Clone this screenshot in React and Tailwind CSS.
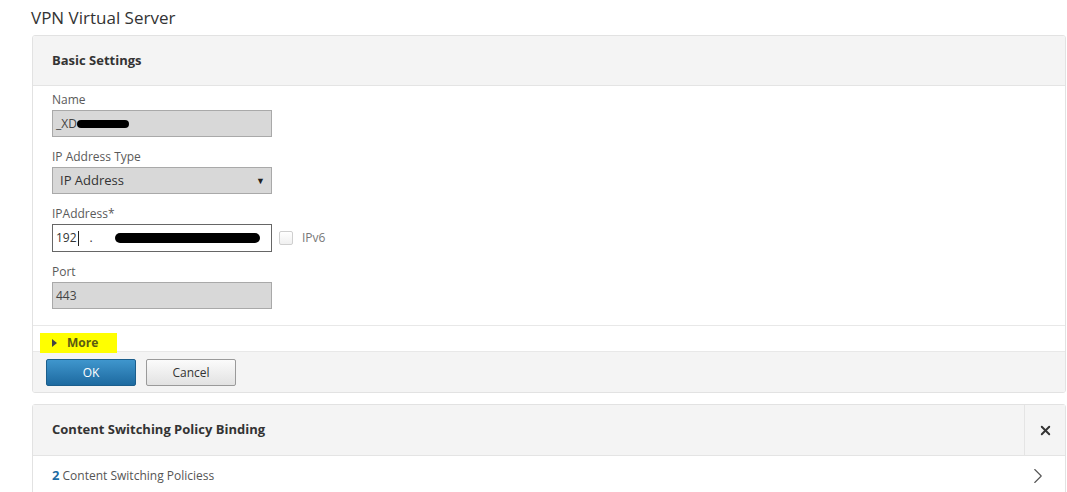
import { X, ChevronRight } from 'lucide-react';

const font = { fontFamily: '"Open Sans", "Liberation Sans", sans-serif' };

const Field = ({ label, children }) => (
  <div className="mb-[11px]">
    <div className="text-[12px] leading-[18px] text-[#5a5a5a]">{label}</div>
    <div className="mt-[1px] flex items-center">{children}</div>
  </div>
);

const Blob = ({ className }) => (
  <span className={`absolute bg-black rounded-full ${className}`} />
);

const App = () => {
  return (
    <div className="min-h-screen bg-white pl-[31px] pr-[1px] pt-[6px] text-[#333]" style={font}>
      {/* Page title */}
      <h1 className="text-[17px] leading-[24px] font-normal text-[#333]">VPN Virtual Server</h1>

      {/* Basic Settings panel */}
      <div className="ml-[1px] mt-[5px] border border-[#e2e2e2] rounded-[3px] overflow-hidden">
        <div className="h-[50px] bg-[#f4f4f4] border-b border-[#e4e4e4] flex items-center pl-[19px]">
          <span className="text-[13px] font-bold text-[#333]">Basic Settings</span>
        </div>

        <div className="pl-[19px] pt-[5px] pb-[5px] border-b border-[#e8e8e8]">
          <Field label="Name">
            <div className="relative w-[220px] h-[27px] bg-[#d8d8d8] border border-[#a9a9a9] pl-[3px] text-[12px] leading-[25px] text-[#444]">
              _XD
              <Blob className="left-[24px] top-[9px] w-[52px] h-[8px]" />
            </div>
          </Field>

          <Field label="IP Address Type">
            <div className="w-[220px] h-[27px] bg-[#d8d8d8] border border-[#a9a9a9] pl-[7px] pr-[6px] flex items-center justify-between text-[13px] text-[#333]">
              <span>IP Address</span>
              <span className="text-[9px] text-[#222]">▼</span>
            </div>
          </Field>

          <Field label="IPAddress*">
            <div className="relative w-[220px] h-[28px] bg-white border border-[#666] pl-[3px] flex items-center text-[12px] text-[#333]">
              <span>192</span>
              <span className="w-px h-[15px] bg-[#222] ml-[1px]" />
              <span className="ml-[11px]">.</span>
              <Blob className="left-[62px] top-[8px] w-[145px] h-[10px]" />
            </div>
            <span className="ml-[7px] w-[14px] h-[14px] border border-[#cfcfcf] rounded-[2px] bg-gradient-to-b from-white to-[#f0f0f0]" />
            <span className="ml-[9px] text-[12px] text-[#777]">IPv6</span>
          </Field>

          <Field label="Port">
            <div className="w-[220px] h-[27px] bg-[#d8d8d8] border border-[#a9a9a9] pl-[3px] text-[12px] leading-[25px] text-[#444]">
              443
            </div>
          </Field>
        </div>

        {/* More toggle */}
        <div className="h-[26px] pl-[7px] pt-[3px] border-b border-[#e8e8e8]">
          <div className="inline-flex items-center h-[20px] w-[77px] bg-[#ffff00] pl-[12px]">
            <span className="w-0 h-0 border-y-[4px] border-y-transparent border-l-[5px] border-l-[#444]" />
            <span className="ml-[10px] text-[12px] font-bold text-[#5b5b12]">More</span>
          </div>
        </div>

        {/* Actions */}
        <div className="bg-[#f4f4f4] pl-[13px] pt-[7px] pb-[6px] flex gap-[10px]">
          <button className="w-[90px] h-[27px] rounded-[2px] border border-[#1b5e8c] bg-gradient-to-b from-[#3f96cd] to-[#1d6aa0] text-white text-[12px]">
            OK
          </button>
          <button className="w-[90px] h-[27px] rounded-[2px] border border-[#9a9a9a] bg-gradient-to-b from-[#fbfbfb] to-[#e2e2e2] text-[#333] text-[12px]">
            Cancel
          </button>
        </div>
      </div>

      {/* Content Switching Policy Binding panel */}
      <div className="ml-[1px] mt-[11px] border border-[#e2e2e2] rounded-t-[3px]">
        <div className="h-[51px] bg-[#f4f4f4] border-b border-[#e4e4e4] flex">
          <div className="flex-1 flex items-center pl-[19px]">
            <span className="text-[13px] font-bold text-[#333]">Content Switching Policy Binding</span>
          </div>
          <div className="w-[41px] border-l border-[#e4e4e4] flex items-center justify-center">
            <X size={15} strokeWidth={3} className="text-[#333]" />
          </div>
        </div>
        <div className="h-[40px] flex items-center justify-between pl-[19px] pr-[14px]">
          <span className="text-[12px] text-[#555]">
            <span className="font-bold text-[#1e6ca3] text-[13px]">2</span> Content Switching Policiess
          </span>
          <ChevronRight size={26} strokeWidth={1} className="text-[#555]" />
        </div>
      </div>
    </div>
  );
};

export default App;
